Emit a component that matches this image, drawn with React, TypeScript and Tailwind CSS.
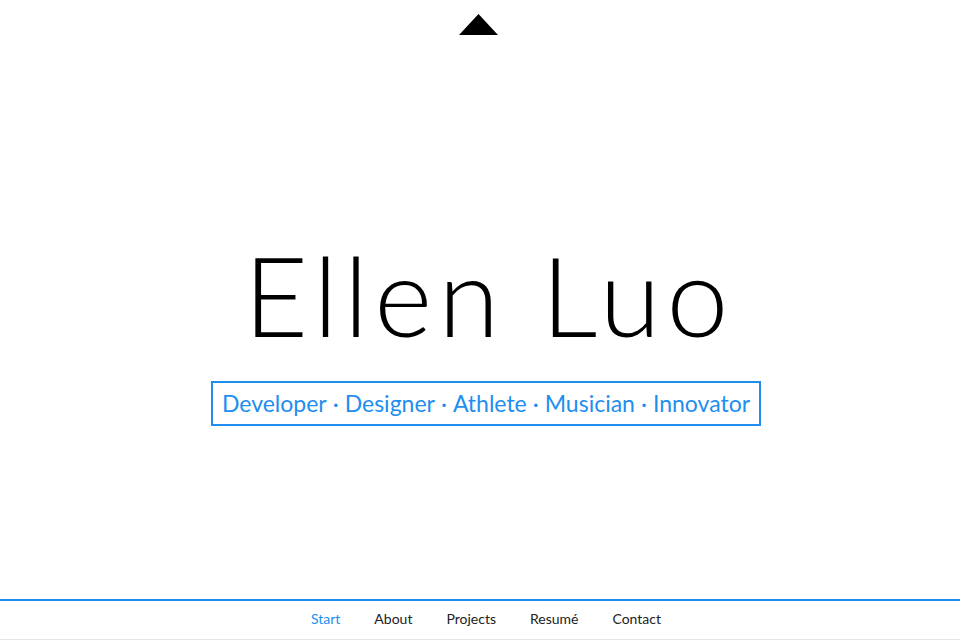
export default function App() {
  const nav = ["Start", "About", "Projects", "Resumé", "Contact"];
  const roles = ["Developer", "Designer", "Athlete", "Musician", "Innovator"];

  return (
    <div className="flex h-[640px] w-full flex-col bg-white font-['Lato',sans-serif] text-black">
      {/* top arrow */}
      <div className="flex justify-center pt-[14px] pr-[4px]">
        <svg width="39" height="21" viewBox="0 0 39 21">
          <polygon points="19.5,0 39,21 0,21" fill="#000" />
        </svg>
      </div>

      {/* hero */}
      <main className="flex flex-1 flex-col items-center pt-[204px] pl-[12px]">
        <h1 className="pl-[6px] text-[111px] font-light leading-none tracking-[6px]">Ellen Luo</h1>
        <div className="mt-[31px] border-2 border-[#1e8ef0] px-[9px] py-[7px] text-[23px] leading-[27px] text-[#1e8ef0]">
          {roles.map((r, i) => (
            <span key={r}>
              {i > 0 && <span className="mx-[6px]">·</span>}
              {r}
            </span>
          ))}
        </div>
      </main>

      {/* footer nav */}
      <nav className="flex h-[41px] items-center justify-center gap-[34px] border-t-2 border-b border-t-[#1e8ef0] border-b-[#e5e5e5] pb-[3px] pl-[12px] text-[14px]">
        {nav.map((n, i) => (
          <a key={n} className={i === 0 ? "text-[#1e8ef0]" : "text-[#222]"}>
            {n}
          </a>
        ))}
      </nav>
    </div>
  );
}
